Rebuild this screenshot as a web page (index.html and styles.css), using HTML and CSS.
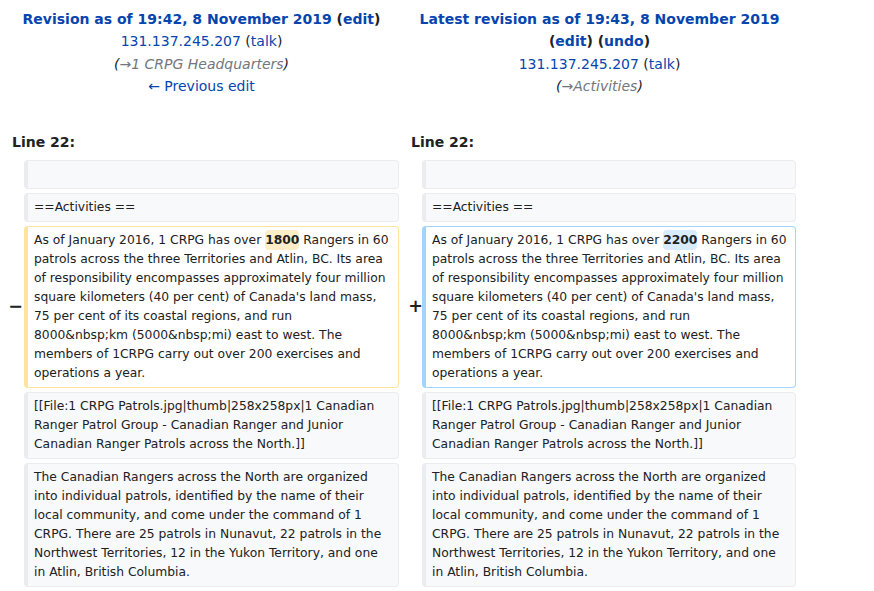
FILE: index.html
```html
<!DOCTYPE html>
<html lang="en">
<head>
<meta charset="utf-8">
<title>Difference between revisions</title>
<link rel="stylesheet" href="styles.css">
</head>
<body>
<table class="diff">
  <colgroup>
    <col class="col-marker-l"><col class="col-content-l"><col class="col-marker-r"><col class="col-content-r">
  </colgroup>
  <tr class="title-row">
    <td colspan="2" class="otitle">
      <div><strong><a class="link" href="#">Revision as of 19:42, 8 November 2019</a> (<a class="link" href="#">edit</a>)</strong></div>
      <div><a class="link" href="#">131.137.245.207</a> (<a class="link" href="#">talk</a>)</div>
      <div class="comment">(<span class="autocomment">→1 CRPG Headquarters</span>)</div>
      <div><a class="link" href="#">← Previous edit</a></div>
    </td>
    <td colspan="2" class="ntitle">
      <div><strong><a class="link" href="#">Latest revision as of 19:43, 8 November 2019</a> (<a class="link" href="#">edit</a>) (<a class="link" href="#">undo</a>)</strong></div>
      <div><a class="link" href="#">131.137.245.207</a> (<a class="link" href="#">talk</a>)</div>
      <div class="comment">(<span class="autocomment">→Activities</span>)</div>
    </td>
  </tr>
  <tr class="spacer-row"><td colspan="4"></td></tr>
  <tr class="lineno-row">
    <td colspan="2" class="lineno">Line 22:</td>
    <td colspan="2" class="lineno">Line 22:</td>
  </tr>
  <tr>
    <td class="marker"></td>
    <td class="cell context left"><div><br></div></td>
    <td class="marker"></td>
    <td class="cell context right"><div><br></div></td>
  </tr>
  <tr>
    <td class="marker"></td>
    <td class="cell context left"><div>==Activities ==</div></td>
    <td class="marker"></td>
    <td class="cell context right"><div>==Activities ==</div></td>
  </tr>
  <tr>
    <td class="marker"><span class="sign sign-minus">−</span></td>
    <td class="cell deleted left"><div>As of January 2016, 1 CRPG has over <del class="hl-del">1800</del> Rangers in 60 patrols across the three Territories and Atlin, BC. Its area of responsibility encompasses approximately four million square kilometers (40 per cent) of Canada's land mass, 75 per cent of its coastal regions, and run<br>8000&amp;nbsp;km (5000&amp;nbsp;mi) east to west. The members of 1CRPG carry out over 200 exercises and operations a year.</div></td>
    <td class="marker"><span class="sign sign-plus">+</span></td>
    <td class="cell added right"><div>As of January 2016, 1 CRPG has over <ins class="hl-ins">2200</ins> Rangers in 60 patrols across the three Territories and Atlin, BC. Its area of responsibility encompasses approximately four million square kilometers (40 per cent) of Canada's land mass, 75 per cent of its coastal regions, and run 8000&amp;nbsp;km (5000&amp;nbsp;mi) east to west. The members of 1CRPG carry out over 200 exercises and operations a year.</div></td>
  </tr>
  <tr>
    <td class="marker"></td>
    <td class="cell context left"><div>[[File:1 CRPG Patrols.jpg|thumb|258x258px|1 Canadian Ranger Patrol Group - Canadian Ranger and Junior Canadian Ranger Patrols across the North.]]</div></td>
    <td class="marker"></td>
    <td class="cell context right"><div>[[File:1 CRPG Patrols.jpg|thumb|258x258px|1 Canadian Ranger Patrol Group - Canadian Ranger and Junior Canadian Ranger Patrols across the North.]]</div></td>
  </tr>
  <tr>
    <td class="marker"></td>
    <td class="cell context left"><div>The Canadian Rangers across the North are organized into individual patrols, identified by the name of their local community, and come under the command of 1 CRPG. There are 25 patrols in Nunavut, 22 patrols in the Northwest Territories, 12 in the Yukon Territory, and one in Atlin, British Columbia.</div></td>
    <td class="marker"></td>
    <td class="cell context right"><div>The Canadian Rangers across the North are organized into individual patrols, identified by the name of their local community, and come under the command of 1 CRPG. There are 25 patrols in Nunavut, 22 patrols in the Northwest Territories, 12 in the Yukon Territory, and one in Atlin, British Columbia.</div></td>
  </tr>
</table>
</body>
</html>
```
FILE: styles.css
```css
html, body {
  background: #ffffff;
}
body {
  margin: 4px 0 0 0;
  font-family: "DejaVu Sans", sans-serif;
  font-size: 14px;
  line-height: 1.6;
  color: #202122;
}
.diff {
  width: 800px;
  table-layout: fixed;
  border-collapse: separate;
  border-spacing: 4px;
}
.col-marker-l { width: 16px; }
.col-content-l { width: 375px; }
.col-marker-r { width: 15px; }
.col-content-r { width: 374px; }
.diff td {
  padding: 0;
}
.otitle, .ntitle {
  text-align: center;
  vertical-align: top;
}
.link {
  color: #0645ad;
  text-decoration: none;
}
.comment {
  font-style: italic;
  color: #202122;
}
.autocomment {
  color: #72777d;
}
.spacer-row td {
  height: 25px;
}
.lineno {
  font-weight: bold;
  padding: 0 0 3px 8px !important;
}
.marker {
  text-align: right;
  vertical-align: middle;
  font-weight: bold;
  font-size: 1.25em;
  line-height: 1.2;
  color: #202122;
}
.sign-minus {
  margin-right: -3px;
}
.sign-plus {
  margin-right: -5px;
}
.cell {
  vertical-align: top;
  font-size: 12.32px;
  line-height: 19px;
  border-style: solid;
  border-width: 1px 1px 1px 4px;
  border-radius: 4px;
  white-space: pre-wrap;
  word-wrap: break-word;
}
.cell.left {
  padding: 4px 6px 4px 6px !important;
}
.cell.right {
  padding: 4px 7px 4px 6px !important;
}
.context {
  background: #f8f9fa;
  border-color: #eaecf0;
  color: #202122;
}
.deleted {
  background: #ffffff;
  border-color: #ffe49c;
}
.added {
  background: #ffffff;
  border-color: #a3d3ff;
}
.hl-del, .hl-ins {
  font-weight: bold;
  text-decoration: none;
  border-radius: 4px;
  padding: 3px 0;
}
.hl-del {
  background: #feeec8;
}
.hl-ins {
  background: #d8ecff;
}
```
